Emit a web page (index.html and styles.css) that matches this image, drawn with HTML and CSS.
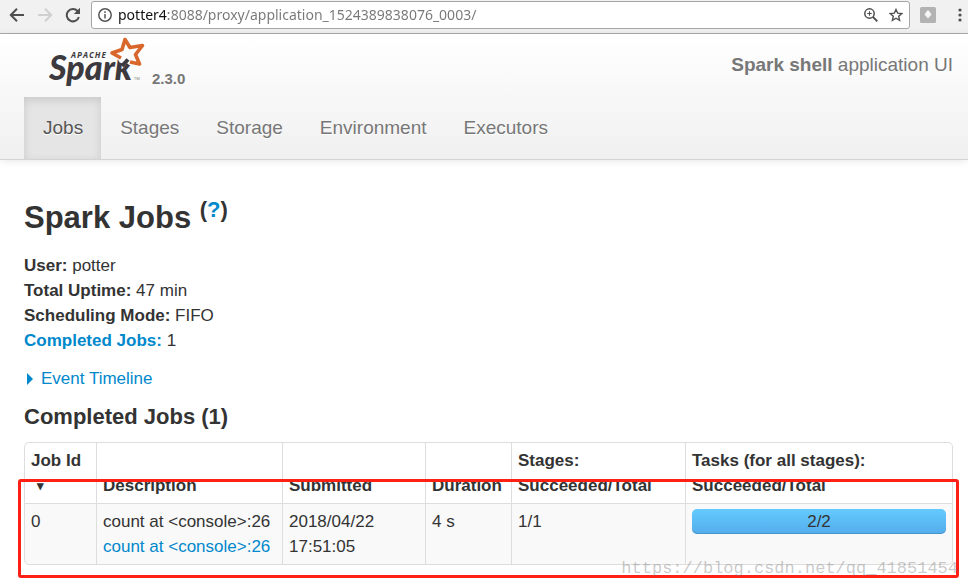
FILE: index.html
```html
<!DOCTYPE html>
<html lang="en">
<head>
<meta charset="utf-8">
<title>Spark shell - Spark Jobs</title>
<link rel="stylesheet" href="styles.css">
</head>
<body>
<div class="toolbar">
  <button class="tool" aria-label="Back"><svg width="16" height="16" viewBox="0 0 16 16" fill="none" stroke="#4f4f4f" stroke-width="2"><path d="M15 8H2M8 1.800L1.800 8L8 14.200"/></svg></button>
  <button class="tool" aria-label="Forward" disabled><svg width="16" height="16" viewBox="0 0 16 16" fill="none" stroke="#d0d0d0" stroke-width="2"><path d="M1 8H14M8 1.800L14.200 8L8 14.200"/></svg></button>
  <button class="tool" aria-label="Reload"><svg width="16" height="16" viewBox="0 0 16 16"><path d="M12.600 4A6.200 6.200 0 1 0 13.900 10" fill="none" stroke="#4f4f4f" stroke-width="2"/><path d="M15 0.800V7H8.800Z" fill="#4f4f4f"/></svg></button>
  <div class="address">
    <svg width="14" height="14" viewBox="0 0 14 14" fill="none" stroke="#555" stroke-width="1.500"><circle cx="7" cy="7" r="6.200"/><path d="M7 6V10.500M7 3.300V5"/></svg>
    <input class="url" type="text" aria-label="Address" value="potter4:8088/proxy/application_1524389838076_0003/">
    <button class="tool" aria-label="Zoom"><svg width="14" height="14" viewBox="0 0 14 14" fill="none" stroke="#4f4f4f" stroke-width="1.500"><circle cx="5.500" cy="5.500" r="4.700"/><path d="M9 9L13.300 13.300" stroke-width="1.900"/><path d="M5.500 3.200V7.800M3.200 5.500H7.800" stroke-width="1.100"/></svg></button>
    <button class="tool" aria-label="Bookmark"><svg width="14" height="14" viewBox="0 0 14 14" fill="none" stroke="#4f4f4f" stroke-width="1.400"><path d="M7 1.500L8.700 5.200L12.800 5.600L9.700 8.300L10.600 12.400L7 10.200L3.400 12.400L4.300 8.300L1.200 5.600L5.300 5.200Z"/></svg></button>
  </div>
  <button class="tool" aria-label="Extension"><svg width="16" height="16" viewBox="0 0 16 16"><rect width="16" height="16" rx="1.500" fill="#b3b3b3"/><path d="M6.500 4.500L8 3L9.500 4.500L11.500 7.500L8 11.500L4.500 7.500Z" fill="#f5f5f5"/></svg></button>
  <button class="tool menu" aria-label="Menu"><svg width="4" height="14" viewBox="0 0 4 14" fill="#4f4f4f"><circle cx="2" cy="2" r="1.600"/><circle cx="2" cy="7" r="1.600"/><circle cx="2" cy="12" r="1.600"/></svg></button>
</div>

<header class="navbar">
  <div class="masthead">
    <a class="brand" href="#">
      <svg class="logo" width="97" height="52" viewBox="0 0 97 52" role="img" aria-label="Apache Spark">
        <text class="logo-word" x="0" y="44">Spark</text>
        <path d="M76 3.500L81 11.500L93.500 9.500L86.500 18.500L90.500 28L81 26L77.500 22.500L72.500 24L71.500 21.500L63 17L73 13.500Z" fill="#fcfcfc" stroke="#fcfcfc" stroke-width="6" stroke-linejoin="round"/>
        <path d="M72 22L63 17L73 13.500L76 3.500L81 11.500L93.500 9.500L86.500 18.500L90.500 28L81 26" fill="none" stroke="#d9662b" stroke-width="3.600" stroke-linejoin="round"/>
        <path d="M73 30L79 23.500" stroke="#3c3a3e" stroke-width="4"/>
        <text class="logo-small" x="22" y="22">APACHE</text>
        <text class="logo-tm" x="85" y="44">TM</text>
      </svg>
      <span class="version">2.3.0</span>
    </a>
    <p class="app"><strong>Spark shell</strong> application UI</p>
  </div>
  <nav class="tabs">
    <a class="tab active" href="#">Jobs</a>
    <a class="tab" href="#">Stages</a>
    <a class="tab" href="#">Storage</a>
    <a class="tab" href="#">Environment</a>
    <a class="tab" href="#">Executors</a>
  </nav>
</header>

<main class="content">
  <h1 class="title">Spark Jobs <sup>(<a href="#">?</a>)</sup></h1>
  <ul class="summary">
    <li><strong>User:</strong> potter</li>
    <li><strong>Total Uptime:</strong> 47 min</li>
    <li><strong>Scheduling Mode:</strong> FIFO</li>
    <li><a href="#completed"><strong>Completed Jobs:</strong></a> 1</li>
  </ul>
  <a class="timeline" href="#"><span class="arrow"></span>Event Timeline</a>
  <h2 class="subtitle" id="completed">Completed Jobs (1)</h2>
  <div class="jobs-wrap">
    <table class="jobs">
      <colgroup><col class="c-id"><col class="c-desc"><col class="c-sub"><col class="c-dur"><col class="c-stages"><col></colgroup>
      <thead>
        <tr><th>Job Id <span class="sort">▾</span></th><th>Description</th><th>Submitted</th><th>Duration</th><th>Stages: Succeeded/Total</th><th>Tasks (for all stages): Succeeded/Total</th></tr>
      </thead>
      <tbody>
        <tr><td>0</td><td class="desc">count at &lt;console&gt;:26<br><a href="#">count at &lt;console&gt;:26</a></td><td>2018/04/22 17:51:05</td><td>4 s</td><td>1/1</td><td><div class="progress">2/2</div></td></tr>
      </tbody>
    </table>
    <div class="highlight"></div>
    <div class="watermark">https://blog.csdn.net/qq_41851454</div>
  </div>
</main>
</body>
</html>
```

FILE: styles.css
```css
* { box-sizing: border-box; }
body {
  margin: 0;
  background: #fff;
  color: #333;
  font: 17px/25px "Liberation Sans", Arial, sans-serif;
}
a { color: #08c; text-decoration: none; }

.toolbar {
  display: flex;
  align-items: center;
  gap: 12px;
  height: 34px;
  padding: 0 6px 4px 9px;
  background: #f1f1f1;
  border-bottom: 1px solid #aaa;
}
.tool {
  display: flex;
  flex: none;
  padding: 0;
  border: 0;
  background: none;
}
.menu { margin-left: 10px; }
.address {
  display: flex;
  flex: 1;
  align-items: center;
  gap: 11px;
  height: 28px;
  margin: 0 -2px;
  padding: 0 6px;
  background: #fff;
  border: 1px solid #a6a6a6;
  border-radius: 3px;
}
.url {
  flex: 1;
  min-width: 0;
  margin-left: -5px;
  padding: 0;
  border: 0;
  outline: 0;
  font: 14px/20px "Noto Sans", sans-serif;
  color: transparent;
  background: linear-gradient(to right, #111 50px, #777 50px);
  -webkit-background-clip: text;
  background-clip: text;
}

.navbar {
  padding: 0 15px 0 24px;
  background: linear-gradient(#fff, #f0f0f0);
  border-bottom: 1px solid #d4d4d4;
  box-shadow: 0 1px 8px rgba(0, 0, 0, 0.1);
}
.masthead {
  display: flex;
  justify-content: space-between;
  height: 63px;
}
.brand {
  display: flex;
  align-items: flex-start;
  gap: 6px;
  padding: 2px 0 0 25px;
}
.logo-word { font: italic 900 34px Lato, sans-serif; fill: #3c3a3e; }
.logo-small { font: italic bold 8px "Open Sans", sans-serif; letter-spacing: 1px; fill: #3c3a3e; }
.logo-tm { font: 4px "Open Sans", sans-serif; fill: #777; }
.version {
  margin-top: 30px;
  font-size: 15px;
  font-weight: bold;
  color: #777;
}
.app {
  margin: 18px 0 0;
  font-size: 19px;
  color: #777;
}
.tabs { display: flex; }
.tab {
  padding: 18px 18px 19px 19px;
  font-size: 19px;
  color: #777;
  text-shadow: 0 1px 0 #fff;
}
.active {
  color: #555;
  background: #e5e5e5;
  box-shadow: inset 0 3px 8px rgba(0, 0, 0, 0.125);
}

.content { padding: 33px 15px 24px 24px; }
.title {
  margin: 0 0 10px;
  font-size: 31px;
  line-height: 50px;
}
.title sup {
  font-size: 22px;
  line-height: 0;
}
.summary {
  margin: 0 0 13px;
  padding: 0;
  list-style: none;
}
.timeline {
  display: flex;
  align-items: center;
  gap: 8px;
}
.arrow {
  margin-left: 3px;
  border: 6px solid transparent;
  border-left-color: #08c;
  border-right-width: 0;
}
.subtitle {
  margin: 13px 0;
  font-size: 22px;
  line-height: 25px;
}
.jobs-wrap { position: relative; }
.jobs {
  width: 100%;
  table-layout: fixed;
  border: 1px solid #ddd;
  border-left: 0;
  border-radius: 5px;
  border-spacing: 0;
}
.c-id { width: 72px; }
.c-desc { width: 186px; }
.c-sub { width: 143px; }
.c-dur { width: 86px; }
.c-stages { width: 174px; }
.jobs th,
.jobs td {
  padding: 5px 6px;
  border-left: 1px solid #ddd;
  text-align: left;
  vertical-align: top;
}
.jobs th { vertical-align: bottom; }
.jobs td {
  border-top: 1px solid #ddd;
  background: #f9f9f9;
}
.jobs th:first-child { border-top-left-radius: 5px; }
.jobs td:first-child { border-bottom-left-radius: 5px; }
.jobs td:last-child { border-bottom-right-radius: 5px; }
.desc { white-space: nowrap; }
.sort {
  display: block;
  padding-left: 6px;
  font-size: 13px;
}
.progress {
  border-radius: 5px;
  background: linear-gradient(#64caff, #54adec);
  box-shadow: inset 0 -1px 0 rgba(0, 0, 0, 0.15);
  text-align: center;
}
.highlight {
  position: absolute;
  inset: 37px -6px -13px -6px;
  border: 3px solid #ff2015;
  border-radius: 3px;
}
.watermark {
  position: absolute;
  right: -5px;
  bottom: -16px;
  font: 17px/25px "Liberation Mono", monospace;
  color: rgba(120, 120, 120, 0.4);
}
```
